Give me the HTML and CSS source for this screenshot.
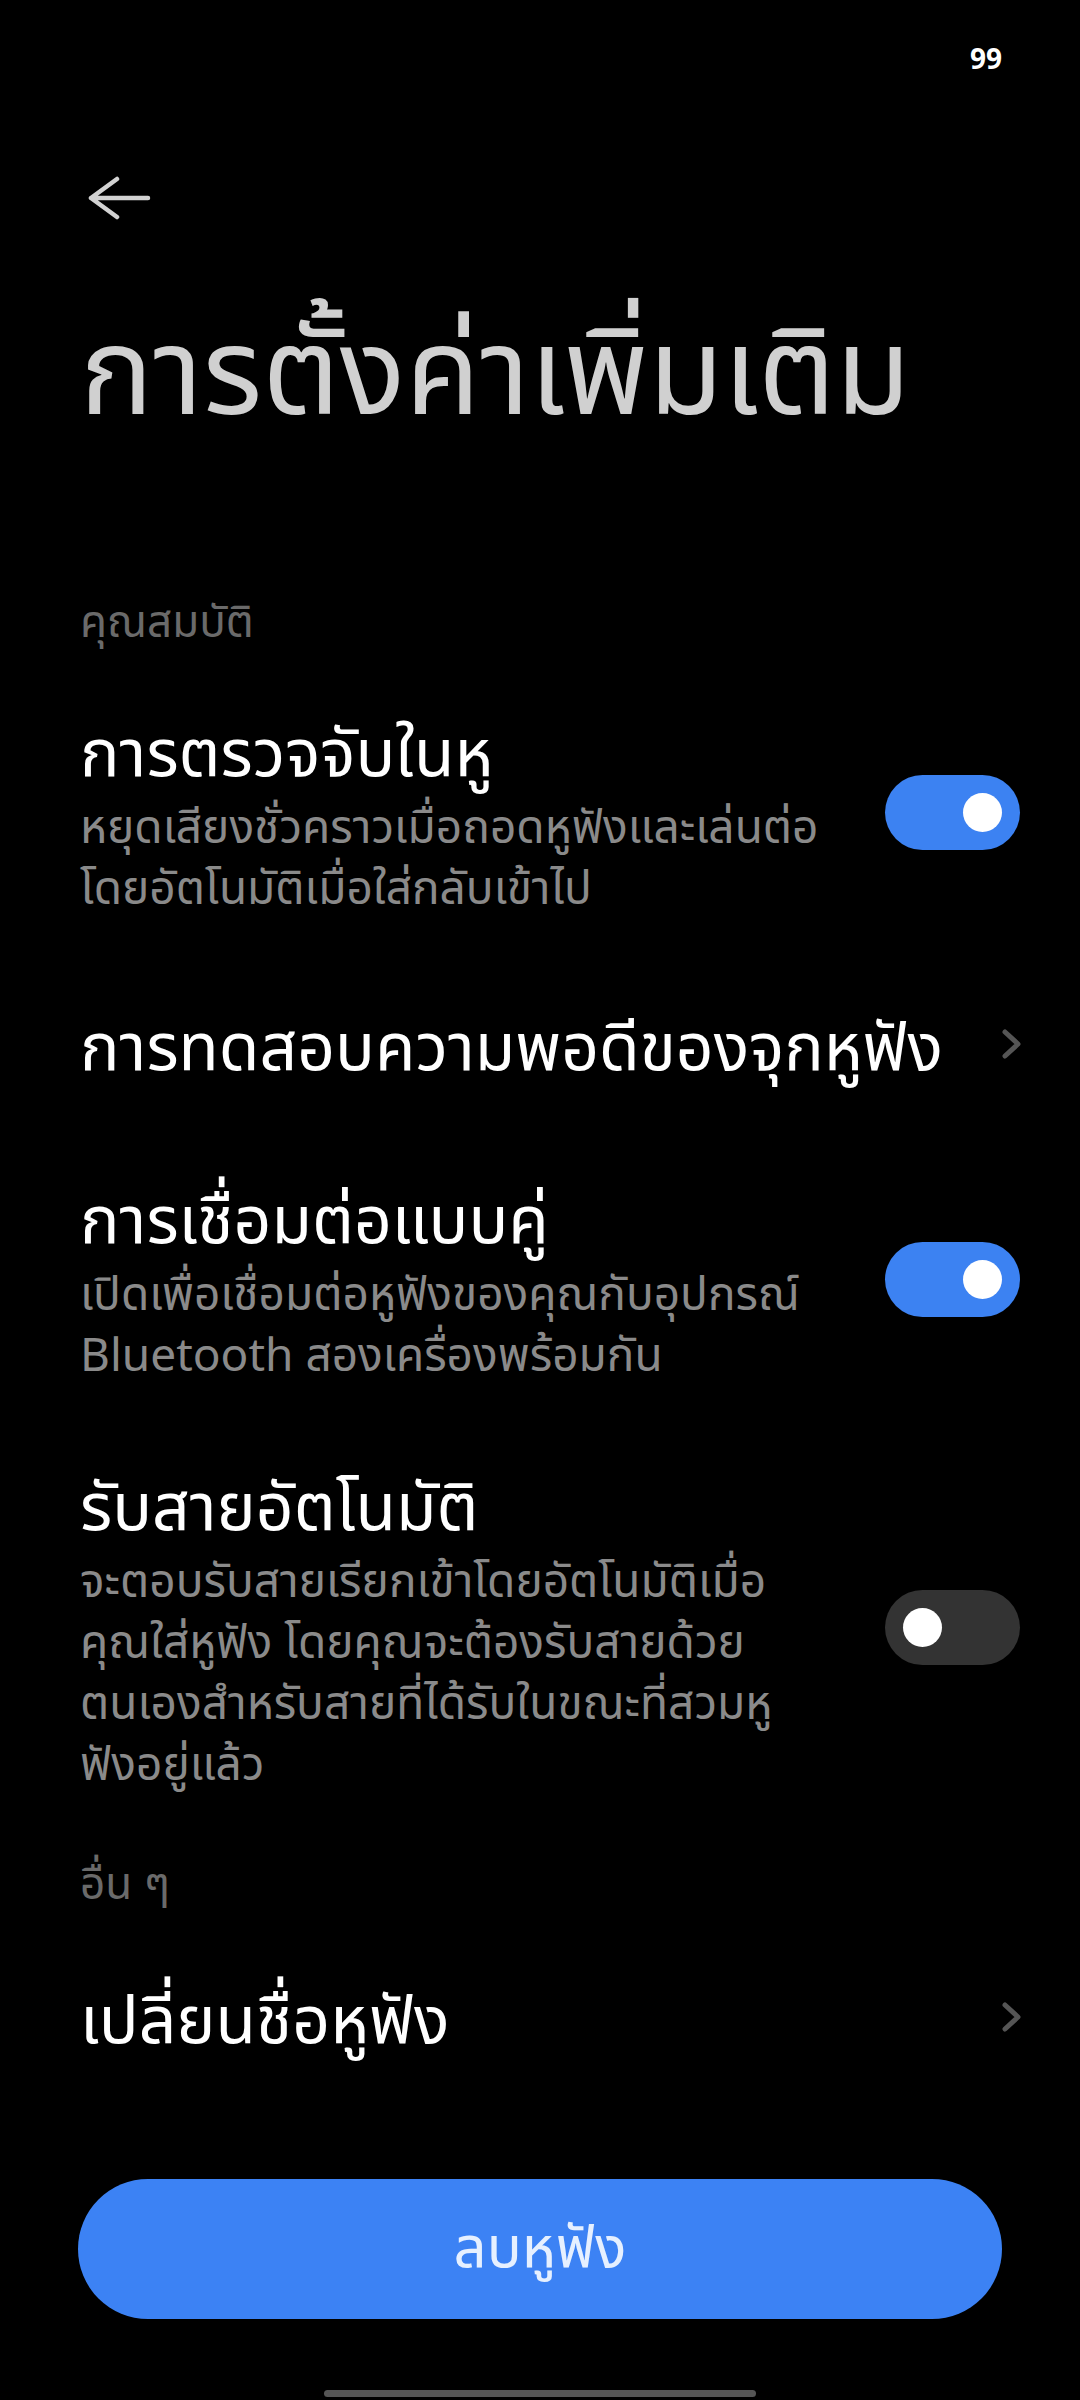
FILE: index.html
```html
<!DOCTYPE html>
<html lang="th">
<head>
  <meta charset="UTF-8" />
  <title>การตั้งค่าเพิ่มเติม</title>
  <link rel="stylesheet" href="styles.css">
</head>
<body>
  <div class="screen">
    <div class="status">99</div>

    <div class="topbar">
      <svg class="back" width="64" height="44" viewBox="0 0 64 44">
        <path d="M30 3 L4 22 L30 41 M4 22 H61" fill="none" stroke="#d2d2d2" stroke-width="4.5" stroke-linecap="round" stroke-linejoin="round"/>
      </svg>
    </div>

    <h1 class="page-title">การตั้งค่าเพิ่มเติม</h1>

    <div class="section">คุณสมบัติ</div>

    <div class="row row-1">
      <div class="text">
        <div class="title">การตรวจจับในหู</div>
        <div class="sub">หยุดเสียงชั่วคราวเมื่อถอดหูฟังและเล่นต่อ<br>โดยอัตโนมัติเมื่อใส่กลับเข้าไป</div>
      </div>
      <div class="toggle on"><span class="knob"></span></div>
    </div>

    <div class="row row-2">
      <div class="text">
        <div class="title">การทดสอบความพอดีของจุกหูฟัง</div>
      </div>
      <svg class="chevron" width="20" height="30" viewBox="0 0 20 30">
        <path d="M3 3 L16 15 L3 27" fill="none" stroke="#555" stroke-width="5" stroke-linecap="round" stroke-linejoin="round"/>
      </svg>
    </div>

    <div class="row row-3">
      <div class="text">
        <div class="title">การเชื่อมต่อแบบคู่</div>
        <div class="sub">เปิดเพื่อเชื่อมต่อหูฟังของคุณกับอุปกรณ์<br>Bluetooth สองเครื่องพร้อมกัน</div>
      </div>
      <div class="toggle on"><span class="knob"></span></div>
    </div>

    <div class="row row-4">
      <div class="text">
        <div class="title">รับสายอัตโนมัติ</div>
        <div class="sub">จะตอบรับสายเรียกเข้าโดยอัตโนมัติเมื่อ<br>คุณใส่หูฟัง โดยคุณจะต้องรับสายด้วย<br>ตนเองสำหรับสายที่ได้รับในขณะที่สวมหู<br>ฟังอยู่แล้ว</div>
      </div>
      <div class="toggle"><span class="knob"></span></div>
    </div>

    <div class="section section-2">อื่น ๆ</div>

    <div class="row row-5">
      <div class="text">
        <div class="title">เปลี่ยนชื่อหูฟัง</div>
      </div>
      <svg class="chevron" width="20" height="30" viewBox="0 0 20 30">
        <path d="M3 3 L16 15 L3 27" fill="none" stroke="#555" stroke-width="5" stroke-linecap="round" stroke-linejoin="round"/>
      </svg>
    </div>

    <div class="footer">
      <button class="delete">ลบหูฟัง</button>
    </div>

    <div class="home-bar"></div>
  </div>
</body>
</html>
```

FILE: styles.css
```css
body {
  margin: 0;
  background: #000;
  font-family: 'Noto Sans', 'Noto Sans Thai', sans-serif;
  color: #fff;
}
.screen {
  width: 1080px;
  height: 2400px;
  position: relative;
  overflow: hidden;
}
.status {
  height: 110px;
  padding-right: 78px;
  text-align: right;
  font-size: 28px;
  font-weight: bold;
  line-height: 116px;
}
.topbar {
  height: 130px;
  margin-top: 23px;
  padding-left: 87px;
  display: flex;
  align-items: center;
}
.page-title {
  margin: 24px 0 0;
  padding-left: 80px;
  font-size: 122px;
  font-weight: normal;
  color: #d0d0d0;
  line-height: 160px;
}
.section {
  padding-left: 80px;
  margin-top: 143px;
  font-size: 44px;
  color: #6a6a6a;
  line-height: 60px;
}
.row {
  display: flex;
  align-items: center;
  justify-content: space-between;
  padding: 0 58px 0 80px;
}
.text {
  flex: 1;
}
.title {
  font-size: 66px;
  line-height: 84px;
}
.sub {
  margin-top: 3px;
  font-size: 46px;
  line-height: 61px;
  color: #8a8a8a;
}
.row-1 {
  margin-top: 58px;
}
.row-2 {
  margin-top: 85px;
}
.row-3 {
  margin-top: 89px;
}
.row-4 {
  margin-top: 78px;
}
.section-2 {
  margin-top: 59px;
}
.row-5 {
  margin-top: 63px;
}
.toggle {
  width: 135px;
  height: 75px;
  margin-right: 2px;
  border-radius: 38px;
  background: #333;
  position: relative;
  flex-shrink: 0;
}
.toggle.on {
  background: #3c82f2;
}
.knob {
  position: absolute;
  top: 18px;
  left: 18px;
  width: 39px;
  height: 39px;
  border-radius: 50%;
  background: #fff;
}
.toggle.on .knob {
  left: auto;
  right: 18px;
}
.footer {
  padding: 0 78px;
  margin-top: 120px;
}
.delete {
  display: block;
  width: 100%;
  height: 140px;
  border: none;
  border-radius: 70px;
  background: #3c82f4;
  color: #e6f0ff;
  font-family: inherit;
  font-size: 58px;
}
.home-bar {
  position: absolute;
  left: 324px;
  bottom: 3px;
  width: 432px;
  height: 7px;
  border-radius: 4px;
  background: #555;
}
```
